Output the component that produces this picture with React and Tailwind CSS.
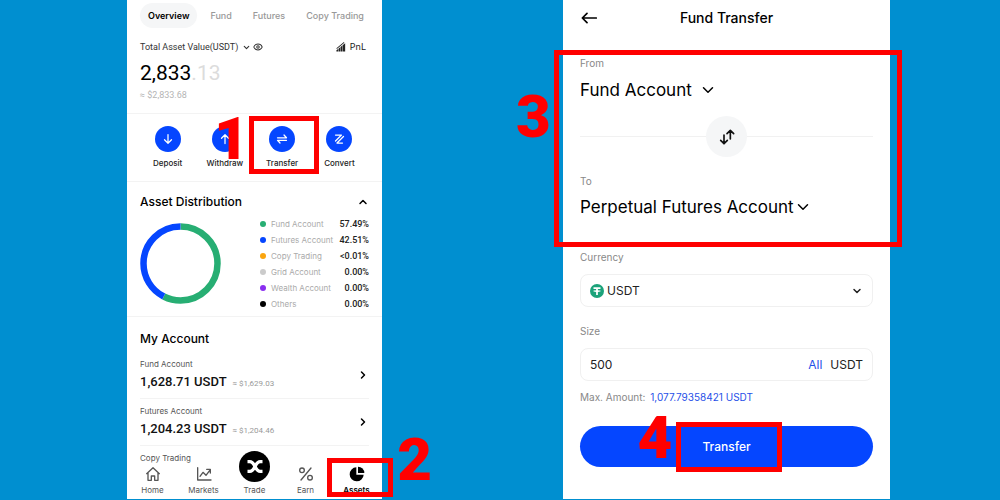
import { useState } from "react";
import { ChevronDown, ChevronRight, ChevronUp, Eye } from "lucide-react";

const tabs = ["Overview", "Fund", "Futures", "Copy Trading"];

const distribution = [
  { label: "Fund Account",    value: "57.49%", dot: "bg-[#27ae73]" },
  { label: "Futures Account", value: "42.51%", dot: "bg-[#0546ff]" },
  { label: "Copy Trading",    value: "<0.01%", dot: "bg-[#faa50f]" },
  { label: "Grid Account",    value: "0.00%",  dot: "bg-[#cbcbcb]" },
  { label: "Wealth Account",  value: "0.00%",  dot: "bg-[#8a2ff0]" },
  { label: "Others",          value: "0.00%",  dot: "bg-black" },
];

const accounts = [
  { label: "Fund Account",    amount: "1,628.71 USDT", usd: "≈ $1,629.03" },
  { label: "Futures Account", amount: "1,204.23 USDT", usd: "≈ $1,204.46" },
];

/* Red frame with a step number, drawn over its relative parent */
function Step({ number, frame, digit }) {
  return (
    <>
      <span className={`pointer-events-none absolute z-10 border-5 border-[#ff0000] ${frame}`} />
      <span className={`pointer-events-none absolute z-10 font-['Roboto',sans-serif] text-[60px] leading-[60px] font-black text-[#ff0000] ${digit}`}>
        {number}
      </span>
    </>
  );
}

function Icon({ className, children, width = 2 }) {
  return (
    <svg viewBox="0 0 24 24" className={className} fill="none" stroke="currentColor"
      strokeWidth={width} strokeLinecap="round" strokeLinejoin="round" aria-hidden="true">
      {children}
    </svg>
  );
}

const actions = [
  { label: "Deposit", icon: <path d="M12 3v17M5 13.500l7 7 7-7" /> },
  { label: "Withdraw", icon: <path d="M12 21V4M5 10.500l7-7 7 7" /> },
  {
    label: "Transfer",
    icon: <path d="M3 9.500h18l-5-5.500M21 14.500H3l5 5.500" />,
    step: { number: 1, frame: "-top-[10px] -bottom-[5px] -left-[5px] -right-[8px]", digit: "-top-[17px] right-[62px]" },
  },
  { label: "Convert", icon: <path d="M5 4h12L5 16M21 7L8 20h11" /> },
];

const navItems = [
  {
    label: "Home",
    icon: <path d="M2.500 11.500L12 2.500l9.500 9M4.500 10v11.500h5v-6.500h5v6.500h5V10" />,
  },
  {
    label: "Markets",
    icon: <path d="M2.500 2.500v18.500h20M6 15.500l4.500-6 4.500 4.500 6.500-8.500M16 5h5.500v5.500" />,
  },
  { label: "Trade", trade: true },
  {
    label: "Earn",
    icon: <><path d="M19.500 3L4.500 21" /><circle cx="6" cy="6.500" r="3.500" /><circle cx="18" cy="17.500" r="3.500" /></>,
  },
  {
    label: "Assets",
    active: true,
    icon: (
      <>
        <path d="M11 2a10.500 10.500 0 1 0 11 11H11z" fill="currentColor" stroke="none" />
        <path d="M13.500 1a9.500 9.500 0 0 1 9.500 9.500h-9.500z" fill="currentColor" stroke="none" />
      </>
    ),
    step: { number: 2, frame: "-top-[8px] bottom-[2px] -left-[4px] -right-[11px]", digit: "-top-[36px] -right-[50px]" },
  },
];

function Donut() {
  return (
    <svg viewBox="0 0 81 81" className="size-[81px] shrink-0 -rotate-90" fill="none" strokeWidth="6.500" role="img" aria-label="Asset distribution chart">
      <circle cx="40.500" cy="40.500" r="37" stroke="#27ae73" pathLength="100" strokeDasharray="57.490 42.510" />
      <circle cx="40.500" cy="40.500" r="37" stroke="#0546ff" pathLength="100" strokeDasharray="42.510 57.490" strokeDashoffset="-57.490" />
    </svg>
  );
}

function AssetsScreen() {
  const [tab, setTab] = useState("Overview");

  return (
    <main className="relative bg-white">
      <div className="px-[13px] pt-[3px] pb-3 border-b border-[#f3f3f3]">
        <div className="flex gap-[5px]">
          {tabs.map((t) => (
            <button key={t} onClick={() => setTab(t)}
              className={`h-[25px] rounded-full px-2 text-[9px] whitespace-nowrap ${t === tab ? "bg-[#f5f6f7] font-semibold text-black" : "font-medium text-[#999]"}`}>
              {t}
            </button>
          ))}
        </div>

        <div className="mt-[13px] flex items-center pr-[3px] text-[9px] leading-3 text-[#333]">
          <span className="font-['Roboto',sans-serif]">Total Asset Value(USDT)</span>
          <ChevronDown className="ml-1 size-[9px]" strokeWidth={3} />
          <button aria-label="Hide balance" className="ml-[2px]">
            <Eye className="size-[10px]" strokeWidth={2.500} />
          </button>
          <button className="ml-auto flex items-center gap-1 text-[#222]">
            <svg viewBox="0 0 24 24" className="size-[10px]" fill="currentColor" aria-hidden="true">
              <path d="M1 15L19 0l1 2L2 17zM1 20l4-3v6H1zM6 16l4-3.500V23H6zM11 12l4-3.500V23h-4zM16 8l6-5v20h-6z" />
            </svg>
            PnL
          </button>
        </div>
        <p className="mt-2 font-['Roboto',sans-serif] text-[21px] leading-6 text-black">
          2,833<span className="text-[#dcdcdc]">.13</span>
        </p>
        <p className="mt-1 font-['Roboto',sans-serif] text-[9px] leading-3 text-[#b5b5b5]">≈ $2,833.68</p>
      </div>

      <div className="grid grid-cols-4 border-b border-[#f3f3f3] py-3 pr-[14px] pl-3">
        {actions.map((a) => (
          <button key={a.label} className="relative flex flex-col items-center">
            <span className="flex size-[26px] items-center justify-center rounded-full bg-[#0546ff] text-white">
              <Icon className="size-3" width={2.500}>{a.icon}</Icon>
            </span>
            <span className="mt-[5px] text-[8px] leading-3 font-medium text-[#222]">{a.label}</span>
            {a.step && <Step {...a.step} />}
          </button>
        ))}
      </div>

      <section className="border-b border-[#f3f3f3] px-[13px] py-3">
        <button className="flex w-full items-center justify-between">
          <h2 className="text-[12px] leading-4 font-medium text-black">Asset Distribution</h2>
          <ChevronUp className="size-3" strokeWidth={3} />
        </button>
        <div className="mt-[13px] flex items-center">
          <Donut />
          <ul className="-my-2 ml-[39px] flex-1 text-[9px] leading-4">
            {distribution.map((d) => (
              <li key={d.label} className="flex items-center">
                <span className={`mr-[5px] size-[6px] rounded-full ${d.dot}`} />
                <span className="text-[8px] whitespace-nowrap text-[#aaa]">{d.label}</span>
                <span className="ml-auto font-['Roboto',sans-serif] font-medium text-[#222]">{d.value}</span>
              </li>
            ))}
          </ul>
        </div>
      </section>

      <section className="px-[13px] pt-[14px]">
        <h2 className="mb-[5px] text-[12px] leading-4 font-medium text-black">My Account</h2>
        {accounts.map((a) => (
          <button key={a.label} className="flex w-full items-center justify-between border-b border-[#f3f3f3] pt-[7px] pb-2 text-left">
            <span>
              <span className="block text-[8px] leading-[10px] text-[#555]">{a.label}</span>
              <span className="mt-[5px] flex items-baseline gap-[6px] font-['Roboto',sans-serif]">
                <span className="text-[13px] leading-4 font-medium text-[#111]">{a.amount}</span>
                <span className="text-[8px] leading-none text-[#999]">{a.usd}</span>
              </span>
            </span>
            <ChevronRight className="size-3" strokeWidth={3} />
          </button>
        ))}
        <p className="pt-[7px] text-[8px] leading-[10px] text-[#555]">Copy Trading</p>
      </section>

      <nav className="grid grid-cols-5 pt-[3px]">
        {navItems.map((n) => (
          <a key={n.label} href={`#${n.label.toLowerCase()}`}
            className={`relative flex flex-col items-center pb-1 text-[8px] leading-[10px] ${n.active ? "font-semibold text-black" : "text-[#555]"}`}>
            {n.trade ? (
              <span className="-mt-[15px] flex size-[31px] items-center justify-center rounded-full bg-black text-white">
                <svg viewBox="0 0 24 20" className="h-[15px] w-[18px]" fill="none" stroke="currentColor" strokeWidth="4.500" aria-hidden="true">
                  <path d="M2 3.500h3c8 0 6 13 14 13h3" />
                  <path d="M22 3.500h-3c-8 0-6 13-14 13H2" />
                </svg>
              </span>
            ) : (
              <Icon className="size-4">{n.icon}</Icon>
            )}
            <span className="mt-[3px]">{n.label}</span>
            {n.step && <Step {...n.step} />}
          </a>
        ))}
      </nav>
    </main>
  );
}

function AccountSelect({ id, label, options, gap }) {
  return (
    <div>
      <label htmlFor={id} className="block text-[10px] leading-3 text-[#888]">{label}</label>
      <div className={`flex items-center text-black ${gap}`}>
        <select id={id} className="field-sizing-content appearance-none bg-transparent text-[17px] leading-6 outline-none">
          {options.map((o) => <option key={o}>{o}</option>)}
        </select>
        <ChevronDown className="size-[18px]" strokeWidth={2} />
      </div>
    </div>
  );
}

function TransferScreen() {
  const [size, setSize] = useState("500");

  return (
    <form className="relative bg-white" onSubmit={(e) => e.preventDefault()}>
      <header className="grid grid-cols-[16px_1fr_16px] items-center px-[18px] pt-2 pb-[22px]">
        <button type="button" aria-label="Back">
          <Icon className="size-4" width={2.500}>
            <path d="M23 12H2M9 5l-7 7 7 7" />
          </Icon>
        </button>
        <h1 className="text-center text-[14px] leading-5 font-medium text-black">Fund Transfer</h1>
      </header>

      <section className="relative px-[17px] pt-[7px] pb-7">
        <AccountSelect id="from" label="From" options={["Fund Account", "Perpetual Futures Account"]} gap="mt-[9px] gap-[7px]" />
        <div className="mt-[14px] flex items-center">
          <span className="h-px flex-1 bg-[#f1f1f1]" />
          <button type="button" aria-label="Swap accounts"
            className="flex size-[41px] items-center justify-center rounded-full bg-[#f5f6f7] text-[#111]">
            <Icon className="size-4" width={2.500}>
              <path d="M7.500 9v13M2.500 17l5 5 5-5M17 15V2M12 7l5-5 5 5" />
            </Icon>
          </button>
          <span className="h-px flex-1 bg-[#f1f1f1]" />
        </div>
        <div className="mt-[18px]">
          <AccountSelect id="to" label="To" options={["Perpetual Futures Account", "Fund Account"]} gap="mt-2" />
        </div>
        <Step number={3} frame="inset-y-0 -left-[9px] -right-[12px]" digit="top-[37px] -left-[47px]" />
      </section>

      <div className="px-[17px] pt-1 pb-8">
        <label htmlFor="currency" className="block text-[10px] leading-3 text-[#888]">Currency</label>
        <div className="mt-[11px] flex h-[33px] items-center rounded-lg border border-[#f0f0f0] px-[9px] text-[12px] text-[#222]">
          <svg viewBox="0 0 24 24" className="size-[14px]" aria-hidden="true">
            <circle cx="12" cy="12" r="12" fill="#1ba27a" />
            <path d="M6 5.500h12v3h-4.500v2c3 .2 5 .8 5 1.500s-2 1.300-5 1.500V19h-3v-5.500c-3-.2-5-.8-5-1.500s2-1.300 5-1.500v-2H6z" fill="#fff" />
          </svg>
          <select id="currency" className="ml-[3px] flex-1 appearance-none bg-transparent outline-none">
            <option>USDT</option>
            <option>BTC</option>
          </select>
          <ChevronDown className="size-3" strokeWidth={3} />
        </div>

        <label htmlFor="size" className="mt-[18px] block text-[10px] leading-3 text-[#888]">Size</label>
        <div className="mt-[11px] flex h-[33px] items-center rounded-lg border border-[#f0f0f0] px-[9px] text-[12px] text-[#222]">
          <input id="size" value={size} onChange={(e) => setSize(e.target.value)} className="min-w-0 flex-1 outline-none" />
          <button type="button" onClick={() => setSize("1077.79358421")} className="text-[#1f50e8]">All</button>
          <span className="ml-2">USDT</span>
        </div>

        <p className="mt-[10px] text-[10px] leading-3 text-[#888]">
          Max. Amount: <span className="ml-[2px] text-[#1f50e8]">1,077.79358421 USDT</span>
        </p>

        <button className="relative mt-[23px] flex h-[41px] w-full items-center justify-center rounded-full bg-[#0546ff] text-[12px] font-medium text-white">
          <span className="relative">
            Transfer
            <Step number={4} frame="-left-[26px] -right-[31px] -inset-y-[16px]" digit="-top-[30px] -left-[65px]" />
          </span>
        </button>
      </div>
    </form>
  );
}

export default function App() {
  return (
    <div className="grid min-h-screen grid-cols-[127fr_minmax(0,255fr)_181fr_minmax(0,327fr)_110fr] items-start overflow-hidden bg-[#008fd0] font-['Inter',sans-serif]">
      <div className="col-start-2">
        <AssetsScreen />
      </div>
      <div className="col-start-4">
        <TransferScreen />
      </div>
    </div>
  );
}
